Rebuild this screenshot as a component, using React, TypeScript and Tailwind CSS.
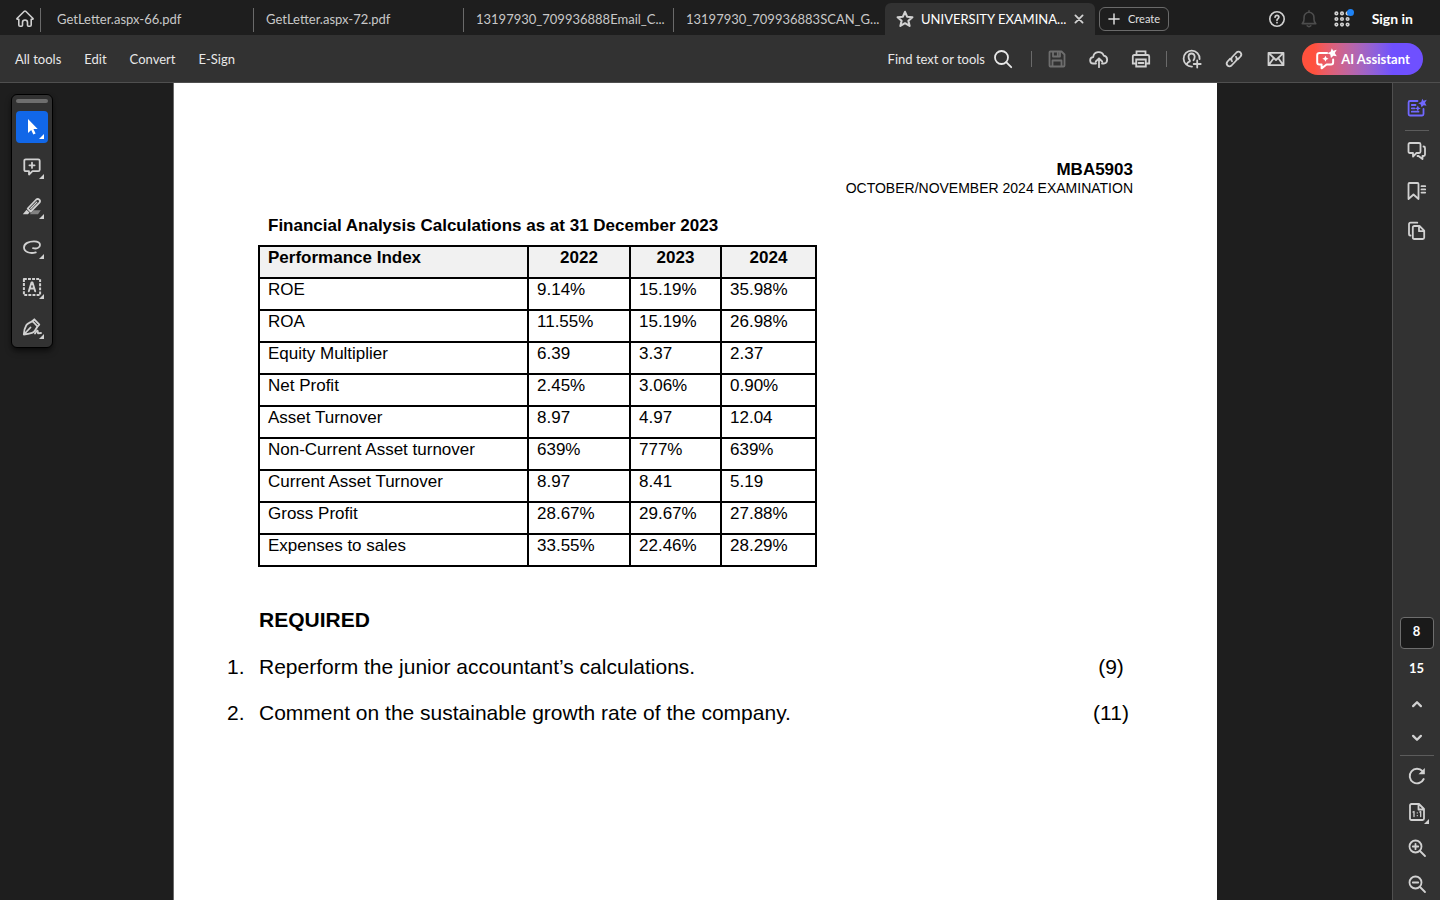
import type { ReactNode } from 'react'

const tabs = [
  'GetLetter.aspx-66.pdf',
  'GetLetter.aspx-72.pdf',
  '13197930_709936888Email_C...',
  '13197930_709936883SCAN_G...',
]

const rows = [
  ['ROE', '9.14%', '15.19%', '35.98%'],
  ['ROA', '11.55%', '15.19%', '26.98%'],
  ['Equity Multiplier', '6.39', '3.37', '2.37'],
  ['Net Profit', '2.45%', '3.06%', '0.90%'],
  ['Asset Turnover', '8.97', '4.97', '12.04'],
  ['Non-Current Asset turnover', '639%', '777%', '639%'],
  ['Current Asset Turnover', '8.97', '8.41', '5.19'],
  ['Gross Profit', '28.67%', '29.67%', '27.88%'],
  ['Expenses to sales', '33.55%', '22.46%', '28.29%'],
]

const questions = [
  { text: 'Reperform the junior accountant’s calculations.', marks: '(9)' },
  { text: 'Comment on the sustainable growth rate of the company.', marks: '(11)' },
]

function Icon({ children, className = 'size-5' }: { children: ReactNode; className?: string }) {
  return (
    <svg
      viewBox="0 0 20 20"
      className={className}
      fill="none"
      stroke="currentColor"
      strokeWidth="1.8"
      strokeLinecap="round"
      strokeLinejoin="round"
      aria-hidden="true"
    >
      {children}
    </svg>
  )
}

function HomeIcon() {
  return (
    <Icon>
      <path d="M3.800 10.200H2.600Q1.300 10.200 2.200 9.200L9.300 2.300Q10 1.700 10.700 2.300L17.800 9.200Q18.700 10.200 17.400 10.200H16.200V16Q16.200 17.300 14.900 17.300H13.500Q12.500 17.300 12.500 16.300V13.500A2.500 2.500 0 0 0 7.500 13.500V16.300Q7.500 17.300 6.500 17.300H5.100Q3.800 17.300 3.800 16Z" strokeWidth="1.600" />
    </Icon>
  )
}

function SparkNote() {
  return (
    <Icon>
      <path d="M10.500 3H3Q1.600 3 1.600 4.400V16.100Q1.600 17.500 3 17.500H15.100Q16.500 17.500 16.500 16.100V11M4.800 7H8.500M4.800 10.300H7.500M4.800 13.700H11.500" />
      <path d="M15.300.8 16.500 2.800 19.800 1.800 18 4.700 19.500 7.800 16.700 7.200 14.500 9.200 13.800 6.500 11.200 5.200 14.200 3.900Z" fill="currentColor" stroke="none" />
      <path d="m10.800 7.500.9 2 2 .9-2 .9-.9 2-.9-2-2-.9 2-.9Z" fill="currentColor" stroke="none" />
    </Icon>
  )
}

const paletteTools = [
  {
    label: 'Select',
    icon: <path d="M6 2V16L9.200 13 11.300 17.500 13.600 16.400 11.500 12.100H15.700Z" fill="currentColor" stroke="none" />,
  },
  {
    label: 'Add comment',
    icon: <path d="M3.800 2.300H16.200Q17.700 2.300 17.700 3.800V12.700Q17.700 14.200 16.200 14.200H10.500L7 17.500V14.200H3.800Q2.300 14.200 2.300 12.700V3.800Q2.300 2.300 3.800 2.300ZM10 5.700V10.900M7.400 8.300H12.600" />,
  },
  {
    label: 'Highlight',
    icon: (
      <>
        <path d="M5.700 11.500 14.300 2.500Q15.800 1.300 17.300 2.700 18.700 4.200 17.400 5.700L8.700 14.500Z" />
        <path d="M8.700 11.500 14.800 5.200" strokeWidth="1.200" />
        <path d="M4.500 12.800 7.500 15.500 6 17.300H.8Z" fill="currentColor" stroke="none" />
        <path d="M11.500 13.200H18.800L16 17.300H7.700Z" fill="currentColor" stroke="none" opacity=".5" />
      </>
    ),
  },
  {
    label: 'Draw',
    icon: <path d="M13.800 15.400C8 17 2 15 2 10.500 2 6.500 7 4.300 12 4.300 16 4.300 18 5.500 18 8 18 11 14.500 12 11 11.200" />,
  },
  {
    label: 'Add text',
    icon: (
      <>
        <path d="M1.900 2H18.100V18H1.900Z" strokeWidth="2" strokeDasharray="2.900 1.200" strokeLinecap="butt" />
        <path d="M6.800 14.300 9.500 5.500H10.500L13.200 14.300M7.800 11.500H12.200" strokeWidth="1.900" />
      </>
    ),
  },
  {
    label: 'Sign',
    icon: (
      <>
        <path d="M1.800 17.500Q2 12 4.300 8.200 5.200 6.800 7.200 5.900L10.500 4.200 15.500 9.500 13 13.500Q12 15.200 10 15.800 6 17 1.800 17.500ZM2.300 17 8.500 10.500" />
        <path d="M10.300 4.200 12.300 2.300 17.300 7.600 15.500 9.500M13 16.500Q15.500 12.500 15.700 14.200T16 16.300L19 16" />
      </>
    ),
  },
]

const iconButton = 'flex items-center justify-center text-[#d1d1d1]'

export default function App() {
  return (
    <div className="flex h-screen flex-col overflow-hidden bg-[#1e1e1e] font-['Lato','Open_Sans',sans-serif] text-[13px] text-[#e8e8e8]">
      {/* Tab strip */}
      <header className="flex h-[35px] shrink-0 items-center">
        <button aria-label="Home" className={`${iconButton} h-full w-10 shrink-0 pl-2.5 pt-0.5`}>
          <HomeIcon />
        </button>
        <nav aria-label="Open documents" className="flex h-full min-w-0 items-center pt-1">
          {tabs.map((tab) => (
            <button
              key={tab}
              className="h-6 w-[210px] min-w-0 shrink truncate border-l border-[#6a6a6a] pl-3 text-left text-[#c8c8c8] first:w-[213px] first:pl-4"
            >
              {tab}
            </button>
          ))}
        </nav>
        <div className="ml-0.5 mt-[3px] flex h-8 w-[210px] shrink-0 items-center rounded-t-md bg-[#323232] pl-2.5 pr-2">
          <button aria-label="Star this file" className={iconButton}>
            <Icon>
              <path d="m10 2.800 2.100 4.900 5.300.5-4 3.500 1.200 5.200L10 14.200l-4.600 2.700 1.200-5.200-4-3.500 5.300-.5Z" strokeWidth="2.100" />
            </Icon>
          </button>
          <button className="ml-1.5 min-w-0 flex-1 whitespace-nowrap pt-px text-left text-white">
            UNIVERSITY EXAMINA...
          </button>
          <button aria-label="Close tab" className={`${iconButton} size-4`}>
            <Icon className="size-3">
              <path d="m4 4 12 12M16 4 4 16" strokeWidth="3" />
            </Icon>
          </button>
        </div>
        <button className="ml-1 mt-[3px] flex h-6 w-[70px] shrink-0 items-center gap-2 rounded-md border border-[#6a6a6a] pl-2 text-[11px] text-[#e0e0e0]">
          <Icon className="size-3">
            <path d="M10 1.500V18.500M1.500 10H18.500" strokeWidth="2.400" />
          </Icon>
          Create
        </button>
        <div className="ml-auto flex shrink-0 items-center pr-[27px] pt-0.5">
          <button aria-label="Help" className={`${iconButton} w-8`}>
            <Icon className="size-[18px]">
              <circle cx="10" cy="10" r="8" strokeWidth="1.800" />
              <path d="M7.900 8Q8 6 10 6T12.100 7.900Q12.100 9 11 9.700 10 10.300 10 11.500M10 14V14.100" strokeWidth="1.900" />
            </Icon>
          </button>
          <button aria-label="Notifications" className="flex w-[33px] items-center justify-center text-[#4d4d4d]">
            <Icon className="size-[18px]">
              <path d="M2.500 15.200Q4.500 13.500 4.500 10V8A5.500 5.500 0 0 1 15.500 8V10Q15.500 13.500 17.500 15.200ZM8 17.500Q10 19.500 12 17.500M10 1V2" />
            </Icon>
          </button>
          <button aria-label="Apps" className={`${iconButton} relative w-8`}>
            <Icon className="size-4">
              {[3, 10, 17].map((y) => [3, 10, 17].map((x) => <circle key={`${x}-${y}`} cx={x} cy={y} r="1.600" strokeWidth="2" />))}
            </Icon>
            <span className="absolute -top-0.5 right-1 size-[7px] rounded-full bg-[#1f83f5]" />
          </button>
          <button className="ml-3.5 text-sm font-bold text-white">Sign in</button>
        </div>
      </header>

      {/* Toolbar */}
      <div className="flex h-12 shrink-0 items-center border-b border-[#4f4f4f] bg-[#323232] pl-[15px] pr-[17px]">
        <div className="flex gap-[23px] pt-0.5">
          <button>All tools</button>
          <button>Edit</button>
          <button>Convert</button>
          <button>E-Sign</button>
        </div>
        <div className="ml-auto flex items-center">
          <button className="mr-[18px] flex items-center gap-2">
            <span className="pt-0.5">Find text or tools</span>
            <Icon>
              <circle cx="8.500" cy="8.500" r="6.500" />
              <path d="m13.200 13.200 5 5" />
            </Icon>
          </button>
          <span className="mr-1 h-4 w-px bg-[#6a6a6a]" />
          <button aria-label="Save" className="flex w-[42px] items-center justify-center text-[#6e6e6e]">
            <Icon>
              <path d="M3.300 2.500H14.500L17.500 5.500V16.500Q17.500 17.500 16.500 17.500H3.300Q2.500 17.500 2.500 16.500V3.300Q2.500 2.500 3.300 2.500ZM6 3V7.500H13V3M10.800 4V6M5.500 17V11.500H14.500V17" />
            </Icon>
          </button>
          <button aria-label="Upload to cloud" className={`${iconButton} w-[42px]`}>
            <Icon>
              <path d="M7 14.500H4.500A3.200 3.200 0 0 1 4.200 8.100 5.500 5.500 0 0 1 14.800 6.700 4 4 0 0 1 15.200 14.500H13M10 18.200V9.500M6.800 12.500 10 9.300 13.200 12.500" />
            </Icon>
          </button>
          <button aria-label="Print" className={`${iconButton} w-[42px]`}>
            <Icon>
              <path d="M5.500 6V2.300H14.500V6M5 14.500H1.800V7.500Q1.800 6 3.300 6H16.700Q18.200 6 18.200 7.500V14.500H15M5.200 10.500H14.800V17.500H5.200ZM7.500 14H12.500" strokeLinejoin="miter" />
            </Icon>
          </button>
          <span className="mx-1 h-4 w-px bg-[#6a6a6a]" />
          <button aria-label="Share with others" className={`${iconButton} w-[42px]`}>
            <Icon>
              <path d="M17.600 10A8 8 0 1 0 10 17.600M5 15.200Q5.300 13.400 7.300 12.700 8.300 12.300 7.700 11.300 6.500 9.500 6.500 7.500 6.700 4.500 9.500 4.500T12.700 7.500Q12.700 9.500 11.500 11.300M15.200 11.500V18.500M11.700 15H18.700" />
            </Icon>
          </button>
          <button aria-label="Copy link" className={`${iconButton} w-[42px]`}>
            <Icon>
              <path d="M8 12.300Q6.300 10 8.200 8L12.500 3.500Q14.500 1.800 16.500 3.500 18.200 5.500 16.500 7.500L13.800 10.300M12 7.700Q13.700 10 11.800 12L7.500 16.500Q5.500 18.200 3.500 16.500 1.800 14.500 3.500 12.500L6.200 9.700" />
            </Icon>
          </button>
          <button aria-label="Send by email" className={`${iconButton} w-[42px]`}>
            <Icon>
              <path d="M2.500 3.800H17.500V16.200H2.500ZM3 4.300 10 11 17 4.300M3 15.700 7.800 9M17 15.700 12.200 9" />
            </Icon>
          </button>
          <button className="ml-[5px] flex h-8 w-[121px] items-center justify-center gap-1 rounded-full bg-linear-to-r from-[#ff513d] from-10% to-[#6f50ff] to-75% font-bold text-white">
            <Icon className="size-[22px]">
              <path d="M11 4.500H4Q2 4.500 2 6.500V13Q2 15 4 15H6V18.500L10.500 15H14.500Q16.500 15 16.500 13V10.500" />
              <path d="M15.300.3 16.500 2.500 19.800 1.500 18 4.500 19.800 7.500 16.700 7 14.500 9.200 13.900 6 11.200 4.800 14.200 3.500Z" fill="currentColor" stroke="none" />
              <path d="m9.500 7 .9 1.900 1.900.9-1.900.9-.9 1.900-.9-1.900-1.900-.9 1.900-.9Z" fill="currentColor" stroke="none" />
            </Icon>
            <span className="pt-0.5">AI Assistant</span>
          </button>
        </div>
      </div>

      <div className="flex min-h-0 flex-1">
        <main className="relative min-w-0 flex-1 overflow-hidden pr-0.5">
          {/* Floating quick tools */}
          <div
            role="toolbar"
            aria-label="Quick tools"
            className="absolute left-[11px] top-[11px] flex flex-col gap-2 rounded-md border border-black bg-[#323232] p-1 shadow-md shadow-black/50"
          >
            <span className="h-1 w-8 rounded-full bg-[#6e6e6e]" />
            {paletteTools.map((tool, i) => (
              <button
                key={tool.label}
                aria-label={tool.label}
                className={`relative flex size-8 items-center justify-center rounded ${i === 0 ? 'bg-[#1167e8] text-white' : 'text-[#d1d1d1]'}`}
              >
                <Icon>{tool.icon}</Icon>
                <svg viewBox="0 0 5 5" className="absolute bottom-1 right-1 size-[5px]" fill="currentColor" aria-hidden="true">
                  <path d="M5 0V5H0Z" />
                </svg>
              </button>
            ))}
          </div>

          {/* Document page */}
          <article className="mx-auto min-h-full w-[1044px] max-w-full border-l border-[#6a6a6a] bg-white pl-[53px] pr-[84px] pt-[78px] font-['Liberation_Sans',Arial,sans-serif] text-black">
            <div className="text-right leading-[18px]">
              <p className="text-[17px] leading-[18px] font-bold">MBA5903</p>
              <p className="text-sm leading-[18px]">OCTOBER/NOVEMBER 2024 EXAMINATION</p>
            </div>
            <h1 className="ml-[41px] mt-5 text-[17px] font-bold leading-[18px]">
              Financial Analysis Calculations as at 31 December 2023
            </h1>
            <table className="ml-[31px] mt-2.5 w-[559px] table-fixed border-collapse text-left text-[17px] leading-5">
              <colgroup>
                <col className="w-[269px]" />
                <col className="w-[102px]" />
                <col className="w-[91px]" />
                <col className="w-[95px]" />
              </colgroup>
              <thead>
                <tr className="bg-[#f1f1f1]">
                  <th className="border-2 border-black px-2 pb-[9px] pt-px">Performance Index</th>
                  <th className="border-2 border-black px-2 pb-[9px] pt-px text-center">2022</th>
                  <th className="border-2 border-black px-2 pb-[9px] pt-px text-center">2023</th>
                  <th className="border-2 border-black px-2 pb-[9px] pt-px text-center">2024</th>
                </tr>
              </thead>
              <tbody>
                {rows.map((row) => (
                  <tr key={row[0]}>
                    {row.map((cell, i) => (
                      <td key={i} className="border-2 border-black px-2 pb-[9px] pt-px">
                        {cell}
                      </td>
                    ))}
                  </tr>
                ))}
              </tbody>
            </table>
            <h2 className="ml-8 mt-[41px] text-[21px] font-bold leading-6">REQUIRED</h2>
            <ol className="mt-[23px] flex flex-col gap-[22px] text-[21px] leading-6">
              {questions.map((q, i) => (
                <li key={q.text} className="flex">
                  <span className="w-8 shrink-0">{i + 1}.</span>
                  <span className="flex-1">{q.text}</span>
                  <span className="w-11 shrink-0 text-center">{q.marks}</span>
                </li>
              ))}
            </ol>
          </article>
        </main>

        {/* Right rail */}
        <aside className="flex w-12 shrink-0 flex-col items-center border-l border-[#4f4f4f] bg-[#323232] pt-[7px]">
          <button aria-label="Generative summary" className="flex h-9 w-8 items-center justify-center text-[#7068ff]">
            <SparkNote />
          </button>
          <span className="mt-1 h-px w-6 shrink-0 bg-[#5c5c5c]" />
          <button aria-label="Comments" className={`${iconButton} h-10 w-8`}>
            <Icon>
              <path d="M2.900 2H12.100Q13.500 2 13.500 3.400V10.600Q13.500 12 12.100 12H9.500L6 15.500V12H2.900Q1.500 12 1.500 10.600V3.400Q1.500 2 2.900 2ZM16.500 5.500Q18 5.500 18 7V13.500Q18 15 16.500 15H15.500V18L11.500 15H10.500" />
            </Icon>
          </button>
          <button aria-label="Bookmarks" className={`${iconButton} h-10 w-8`}>
            <Icon>
              <path d="M2.500 2Q1.500 2 1.500 3V18L6.500 13.500 11.500 18V3Q11.500 2 10.500 2ZM14.500 5.200H18.200M14.500 8.400H18.200M14.500 11.600H18.200" />
            </Icon>
          </button>
          <button aria-label="Page thumbnails" className={`${iconButton} h-10 w-8`}>
            <Icon>
              <path d="M3.500 14.500H3.300Q2 14.500 2 13.200V3.200Q2 1.700 3.500 1.700H10.300M7.300 5H12.500L17.200 9.700V16.500Q17.200 18 15.700 18H7.300Q5.800 18 5.800 16.500V6.500Q5.800 5 7.300 5ZM12 5.500V10.200H16.700" />
            </Icon>
          </button>

          <div className="mt-auto flex flex-col items-center">
            <input
              aria-label="Page number"
              defaultValue="8"
              className="h-8 w-[34px] rounded border border-[#6e6e6e] bg-[#1a1a1a] pb-1 text-center font-bold text-white"
            />
            <span className="h-[38px] font-bold leading-[38px] text-white">15</span>
            <button aria-label="Previous page" className={`${iconButton} h-[34px] w-8`}>
              <Icon className="size-3">
                <path d="m3.500 13.500 6.500-6.500 6.500 6.500" strokeWidth="3.800" />
              </Icon>
            </button>
            <button aria-label="Next page" className={`${iconButton} h-[34px] w-8`}>
              <Icon className="size-3">
                <path d="m3.500 6.500 6.500 6.500 6.500-6.500" strokeWidth="3.800" />
              </Icon>
            </button>
            <span className="h-px w-[34px] bg-[#5c5c5c]" />
            <div className="mt-1 flex flex-col gap-1">
              <button aria-label="Rotate" className={`${iconButton} size-8`}>
                <Icon>
                  <path d="M16.700 13A7.300 7.300 0 1 1 15.500 5.200" strokeWidth="1.900" />
                  <path d="M17.800 2V8.300H11.500Z" fill="currentColor" stroke="none" />
                </Icon>
              </button>
              <button aria-label="Actual size" className={`${iconButton} relative size-8`}>
                <Icon>
                  <path d="M4.500 2H12L17 7V16.500Q17 18 15.500 18H4.500Q3 18 3 16.500V3.500Q3 2 4.500 2ZM11.500 2.500V7.500H16.500" />
                  <path d="M6 10 7 9.500V14.500M12.700 10 13.700 9.500V14.500M10.300 10.800V10.900M10.300 13.600V13.700" strokeWidth="1.300" />
                </Icon>
                <svg viewBox="0 0 5 5" className="absolute bottom-1 right-1 size-[5px]" fill="currentColor" aria-hidden="true">
                  <path d="M5 0V5H0Z" />
                </svg>
              </button>
              <button aria-label="Zoom in" className={`${iconButton} size-8`}>
                <Icon>
                  <circle cx="8.500" cy="8.500" r="6" />
                  <path d="m13 13 5 5M8.500 5.800V11.200M5.800 8.500H11.200" />
                </Icon>
              </button>
              <button aria-label="Zoom out" className={`${iconButton} size-8`}>
                <Icon>
                  <circle cx="8.500" cy="8.500" r="6" />
                  <path d="m13 13 5 5M5.800 8.500H11.200" />
                </Icon>
              </button>
            </div>
          </div>
        </aside>
      </div>
    </div>
  )
}
